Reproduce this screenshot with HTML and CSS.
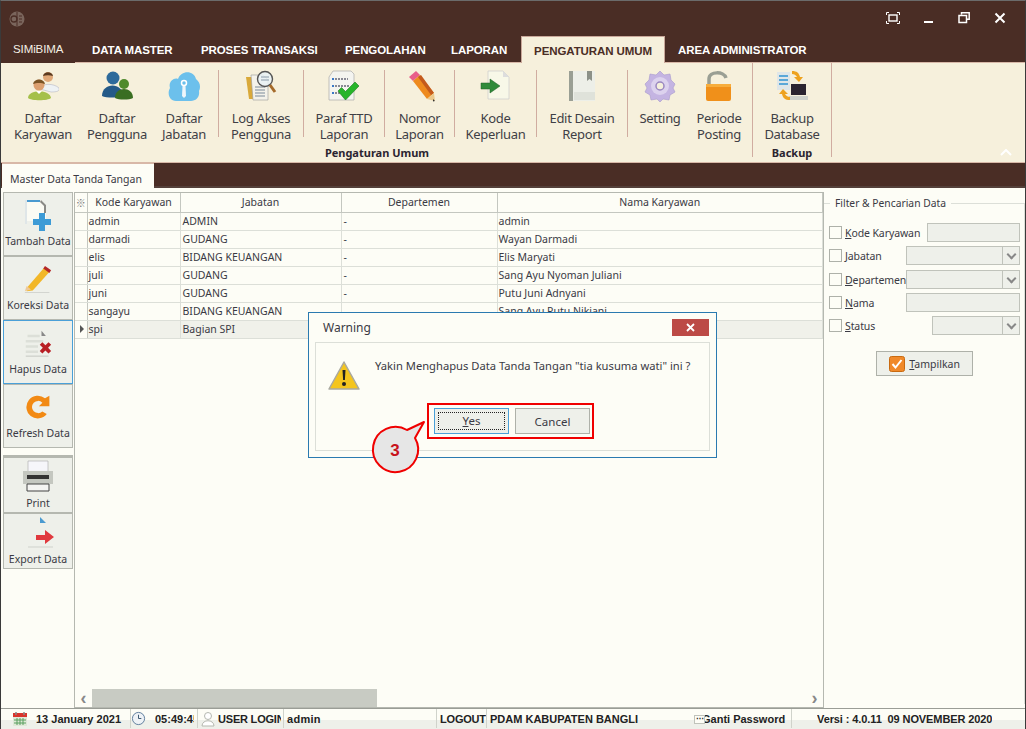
FILE: index.html
```html
<!DOCTYPE html>
<html lang="id">
<head>
<meta charset="utf-8">
<title>SIMiBIMA</title>
<link rel="stylesheet" href="styles.css">
</head>
<body>
<div class="app">
  <header class="titlebar">
    <svg class="logo" width="18" height="18" viewBox="0 0 18 18"><circle cx="9" cy="9" r="7.5" fill="#7a655c"/><path d="M9 2v14" stroke="#4a2d25"/><circle cx="6" cy="9" r="3" fill="none" stroke="#4a2d25" stroke-width="1.3"/><path d="M11 6h3M11 9h3M11 12h3" stroke="#4a2d25"/></svg>
    <div class="winbtns">
      <svg width="14" height="12" viewBox="0 0 14 12"><path d="M.5 3V.5H3M11 .5h2.500V3M13.500 9v2.500H11M3 11.500H.5V9" fill="none" stroke="#fff"/><rect x="3" y="3" width="8" height="6" fill="none" stroke="#fff" stroke-width="1.400"/></svg>
      <svg width="10" height="12" viewBox="0 0 10 12"><rect y="9" width="9" height="2" fill="#fff"/></svg>
      <svg width="12" height="12" viewBox="0 0 12 12"><path d="M3.500 2.500V.8h7.700v6.500H9M1 3.500h7.500v7H1z" fill="none" stroke="#fff" stroke-width="1.500"/></svg>
      <svg width="12" height="12" viewBox="0 0 12 12"><path d="M1.500 1.500l9 9M10.500 1.500l-9 9" stroke="#fff" stroke-width="2"/></svg>
    </div>
  </header>

  <nav class="tabs">
    <span class="tab-app">SIMiBIMA</span>
    <span class="tab t-master">DATA MASTER</span>
    <span class="tab t-proses">PROSES TRANSAKSI</span>
    <span class="tab t-olah">PENGOLAHAN</span>
    <span class="tab t-lap">LAPORAN</span>
    <span class="tab tab-active">PENGATURAN UMUM</span>
    <span class="tab t-admin">AREA ADMINISTRATOR</span>
  </nav>

  <section class="ribbon">
    <div class="group group-main">
      <div class="group-items">
        <div class="item">
          <svg class="ico" viewBox="0 0 32 32"><circle cx="21" cy="7" r="5" fill="#e0a878"/><path d="M16 6c1-5 9-5 10 0-3-1-7-1-10 0z" fill="#5b3a20"/><path d="M13 19c1-6 14-6 19-1 1 3-2 4-8 4z" fill="#eef2f4" stroke="#aab" stroke-width=".5"/><circle cx="12" cy="15" r="5.500" fill="#dca070"/><path d="M6 14c1-6 11-6 12 0-3-1.500-9-1.500-12 0z" fill="#7a5426"/><path d="M1 28c0-9 22-9 23 0-3 3-20 3-23 0z" fill="#a5c04a"/><path d="M9 21l3 3 3-3" fill="#fff"/></svg>
          <span class="lbl">Daftar<br>Karyawan</span>
        </div>
        <div class="item">
          <svg class="ico" viewBox="0 0 32 32"><circle cx="12" cy="8" r="6.500" fill="#2d6a9b"/><path d="M1 26c0-14 21-14 21 0-4 2-17 2-21 0z" fill="#245a88"/><circle cx="23" cy="14" r="5" fill="#4f8a2c"/><path d="M14 28c0-12 18-12 18 0-4 2-14 2-18 0z" fill="#3a6e22"/></svg>
          <span class="lbl">Daftar<br>Pengguna</span>
        </div>
        <div class="item sep">
          <svg class="ico" viewBox="0 0 32 32"><path d="M8 31C1 31-1 23 2 18 0 12 6 7 10 9 13 0 26 0 28 9c4 3 5 8 3 12 1 6-3 10-8 10z" fill="#6cc0ec"/><circle cx="16" cy="13" r="2.500" fill="none" stroke="#fff" stroke-width="1.500"/><path d="M14.500 16h3l.5 10-2 2-2-2z" fill="#eef6fb"/></svg>
          <span class="lbl">Daftar<br>Jabatan</span>
        </div>
        <div class="item sep">
          <svg class="ico" viewBox="0 0 32 32"><path d="M1 7h8l2 2v20H4z" fill="#d9a93a"/><path d="M6 5h12l5 5v20H8z" fill="#f4f2ea" stroke="#999" stroke-width=".6"/><path d="M10 17h10M10 20h10M10 23h10M10 26h10" stroke="#7a8a9a"/><circle cx="20" cy="9" r="7.500" fill="#e9f2f6" fill-opacity=".85" stroke="#555" stroke-width="1.400"/><path d="M16 7h8M16 10h8" stroke="#8a9aa8"/><path d="M25 15l5 7" stroke="#a56a2a" stroke-width="3"/></svg>
          <span class="lbl">Log Akses<br>Pengguna</span>
        </div>
        <div class="item sep">
          <svg class="ico" viewBox="0 0 32 32"><path d="M5 1h18l3 3v26H1V7z" fill="#f4f4f0" stroke="#aaa" stroke-width=".7"/><path d="M7 9h13M7 16h15M7 23h10" stroke="#667" stroke-width="1.300" stroke-dasharray="2 1"/><path d="M4 9h2M4 16h2M4 23h2" stroke="#3a78c8" stroke-width="2"/><path d="M10 21l3.500-3.500 4 4L27 12l4 4-13.500 14z" fill="#27b52a" stroke="#1a7a1c" stroke-width=".6"/></svg>
          <span class="lbl">Paraf TTD<br>Laporan</span>
        </div>
        <div class="item sep">
          <svg class="ico" viewBox="0 0 32 32"><path d="M5 7l7-6 4 4-7 6z" fill="#e85d8a"/><path d="M9 11l7-6 14 18-7 6z" fill="#ee8a1e"/><path d="M14 7l3-2 13 18-3 2z" fill="#c45a1c"/><path d="M23 29l7-6 1 8z" fill="#ecc98c"/><path d="M29 29l2 2-2 .5z" fill="#333"/></svg>
          <span class="lbl">Nomor<br>Laporan</span>
        </div>
        <div class="item sep">
          <svg class="ico" viewBox="0 0 32 32"><path d="M8 1h15l6 6v22H8z" fill="#f8f8e8" stroke="#ccc" stroke-width=".7"/><path d="M23 1v6h6z" fill="#ddd"/><path d="M1 13h9v-4l10 7-10 7v-4H1z" fill="#2f8a3a" stroke="#205c28" stroke-width=".5"/></svg>
          <span class="lbl">Kode<br>Keperluan</span>
        </div>
        <div class="item sep">
          <svg class="ico" viewBox="0 0 32 32"><rect x="3" y="1" width="26" height="30" fill="#edefe8"/><rect x="3" y="1" width="4" height="30" fill="#9a9f94"/><rect x="8" y="22" width="21" height="8" fill="#dfe2da"/><path d="M21 1h5v10l-2.500-2-2.500 2z" fill="#8c9188"/></svg>
          <span class="lbl">Edit Desain<br>Report</span>
        </div>
        <div class="item">
          <svg class="ico" viewBox="0 0 32 32"><path d="M16 1l4 4 6-1 1 6 4 4-2 4 2 4-5 3-1 5-6-1-3 3-3-3-6 1-1-5-5-3 2-4-2-4 4-4 1-6 6 1z" fill="#c4b4e2" stroke="#a898cc" stroke-width=".6"/><circle cx="16" cy="16" r="9" fill="#dcd2ee"/><circle cx="16" cy="16" r="4" fill="#f5f0dc" stroke="#9a88c0" stroke-width="1.500"/></svg>
          <span class="lbl">Setting</span>
        </div>
        <div class="item">
          <svg class="ico" viewBox="0 0 32 32"><path d="M6 15V9C6 1 21 1 23 8" fill="none" stroke="#9a9f94" stroke-width="3.500"/><rect x="3" y="14" width="25" height="17" rx="2" fill="#f0901a"/><rect x="3" y="14" width="25" height="3" fill="#f7ad3c"/></svg>
          <span class="lbl">Periode<br>Posting</span>
        </div>
        <div></div>
      </div>
      <div class="group-label">Pengaturan Umum</div>
    </div>
    <div class="group group-backup">
      <div class="group-items-single">
        <div class="item">
          <svg class="ico" viewBox="0 0 32 32"><rect x="1" y="2" width="13" height="18" fill="#dfe6e8"/><path d="M3 6h9M3 10h9M3 14h9" stroke="#5ba8d8" stroke-width="2"/><path d="M16 1c5 0 7 2 8 6h3l-4 5-5-5h3c-1-2-3-3-5-3z" fill="#eea21e"/><rect x="15" y="14" width="15" height="11" fill="#2b2430"/><rect x="13" y="26" width="19" height="4" fill="#cfd2cc"/><path d="M14 30c-5 0-7-2-8-6H3l4-5 5 5H9c1 2 3 3 5 3z" fill="#eea21e"/></svg>
          <span class="lbl">Backup<br>Database</span>
        </div>
      </div>
      <div class="group-label">Backup</div>
    </div>
    <svg class="collapse" width="12" height="7" viewBox="0 0 12 7"><path d="M1 6l5-5 5 5" fill="none" stroke="#fff" stroke-width="2"/></svg>
  </section>

  <div class="docbar">
    <span class="doctab">Master Data Tanda Tangan</span>
  </div>

  <main class="workspace">
    <aside class="toolbar">
      <div class="tool-group">
        <button class="tool">
          <svg class="tool-ico" viewBox="0 0 28 32"><path d="M1 1h16l5 5v16H1z" fill="#fbfbf4"/><path d="M1 1h15v2H1z" fill="#4a9ad0"/><path d="M1 1h2v24H1z" fill="#dfe6e8"/><path d="M17 1l5 5v8h-2V7l-4-4z" fill="#8a8a86"/><path d="M15 14h6v6h6v6h-6v6h-6v-6H9v-6h6z" fill="#3d9bd6"/></svg>
          <span>Tambah Data</span>
        </button>
        <button class="tool">
          <svg class="tool-ico" viewBox="0 0 32 32"><path d="M4 25l19-22 6 5-19 21-7 1z" fill="#f2b728"/><path d="M22 4l2-3 7 5-2 3z" fill="#b42828"/><path d="M1 30l2-6 5 4z" fill="#eec998"/><path d="M1 31h28v1H1z" fill="#cfd2cc"/></svg>
          <span>Koreksi Data</span>
        </button>
        <button class="tool tool-focus">
          <svg class="tool-ico" viewBox="0 0 32 32"><path d="M20 2l5 6h-5z" fill="#888"/><path d="M4 8h14M2 14h20M2 20h14M2 26h14" stroke="#dcdfd8" stroke-width="3"/><path d="M2 31h26" stroke="#bfc2ba"/><path d="M18 18l3-3 3.500 3.500L28 15l3 3-3.500 3.500L31 25l-3 3-3.500-3.500L21 28l-3-3 3.500-3.500z" fill="#b81f24"/></svg>
          <span>Hapus Data</span>
        </button>
        <button class="tool">
          <svg class="tool-ico" viewBox="0 0 32 32"><path d="M26 24a13 13 0 1 1-2-18l5-3v12H17l4-4a7 7 0 1 0 0 10z" fill="#f28a14"/></svg>
          <span>Refresh Data</span>
        </button>
      </div>
      <div class="tool-group tool-group-2">
        <button class="tool tool-small">
          <svg class="tool-ico" viewBox="0 0 32 32"><path d="M6 1h20v11H6z" fill="#f6f6fa" stroke="#aaa" stroke-width=".6"/><path d="M1 11h30v13H1z" fill="#c4c7c0"/><rect x="5" y="15" width="22" height="4" fill="#333"/><path d="M5 24h22v7H5z" fill="#f4f4f2" stroke="#444"/></svg>
          <span>Print</span>
        </button>
        <button class="tool tool-small">
          <svg class="tool-ico" viewBox="0 0 32 32"><path d="M18 1l6 6h-6z" fill="#4a9ad0"/><path d="M14 19h9v-5l9 7-9 7v-4h-9z" fill="#e0393e"/><path d="M6 31h25" stroke="#cfd2cc"/></svg>
          <span>Export Data</span>
        </button>
      </div>
    </aside>

    <section class="grid-wrap">
      <table class="grid">
        <thead>
          <tr><th class="ind"><span class="star">&#8251;</span></th><th>Kode Karyawan</th><th>Jabatan</th><th>Departemen</th><th>Nama Karyawan</th></tr>
        </thead>
        <tbody>
          <tr><td class="ind"></td><td>admin</td><td>ADMIN</td><td>-</td><td>admin</td></tr>
          <tr><td class="ind"></td><td>darmadi</td><td>GUDANG</td><td>-</td><td>Wayan Darmadi</td></tr>
          <tr><td class="ind"></td><td>elis</td><td>BIDANG KEUANGAN</td><td>-</td><td>Elis Maryati</td></tr>
          <tr><td class="ind"></td><td>juli</td><td>GUDANG</td><td>-</td><td>Sang Ayu Nyoman Juliani</td></tr>
          <tr><td class="ind"></td><td>juni</td><td>GUDANG</td><td>-</td><td>Putu Juni Adnyani</td></tr>
          <tr><td class="ind"></td><td>sangayu</td><td>BIDANG KEUANGAN</td><td>-</td><td>Sang Ayu Putu Nikiani</td></tr>
          <tr class="sel"><td class="ind"><i class="caret"></i></td><td>spi</td><td>Bagian SPI</td><td></td><td></td></tr>
        </tbody>
      </table>
      <div class="hscroll">
        <span class="sb-arrow">&#8249;</span>
        <div class="sb-track"><div class="sb-thumb"></div></div>
        <span class="sb-arrow">&#8250;</span>
      </div>
    </section>

    <aside class="filter">
      <fieldset class="fset">
        <legend>Filter &amp; Pencarian Data</legend>
        <div class="frow r-kode"><i class="cb"></i><label><u>K</u>ode Karyawan</label><span class="inp"></span></div>
        <div class="frow r-jab"><i class="cb"></i><label><u>J</u>abatan</label><span class="inp combo"><b class="drop"></b></span></div>
        <div class="frow r-dep"><i class="cb"></i><label><u>D</u>epartemen</label><span class="inp combo"><b class="drop"></b></span></div>
        <div class="frow r-nama"><i class="cb"></i><label><u>N</u>ama</label><span class="inp"></span></div>
        <div class="frow r-stat"><i class="cb"></i><label><u>S</u>tatus</label><span class="inp combo"><b class="drop"></b></span></div>
        <button class="show">
          <svg width="16" height="16" viewBox="0 0 16 16"><rect x=".5" y=".5" width="15" height="15" rx="2" fill="#f0892a" stroke="#c96a10"/><path d="M3.500 8l3 3.500 6-7.500" fill="none" stroke="#fff" stroke-width="2"/></svg>
          <span><u>T</u>ampilkan</span>
        </button>
      </fieldset>
    </aside>
  </main>

  <footer class="status">
    <svg class="st-ico" width="16" height="16" viewBox="0 0 16 16"><rect x="1" y="2" width="14" height="13" fill="#dfe8d8"/><rect x="1" y="2" width="14" height="4" fill="#d8342c"/><path d="M4 1v3M12 1v3" stroke="#888" stroke-width="1.500"/><path d="M2 9h12M2 12h12M5 7v7M8 7v7M11 7v7" stroke="#5aa060"/></svg>
    <span class="st s-date">13 January 2021</span>
    <span class="st s-clock"><svg width="15" height="15" viewBox="0 0 16 16"><circle cx="8" cy="8" r="6.500" fill="#eef2f6" stroke="#5a7a9a"/><path d="M8 4v4h3" fill="none" stroke="#33506a"/></svg></span>
    <span class="st s-time">05:49:45</span>
    <span class="st s-user"><svg width="14" height="16" viewBox="0 0 14 16"><circle cx="7" cy="5" r="3.500" fill="#fff" stroke="#b5b8b0"/><path d="M1 15c0-7 12-7 12 0z" fill="#fff" stroke="#b5b8b0"/></svg></span>
    <span class="st s-ulabel">USER LOGIN</span>
    <span class="st s-admin">admin</span>
    <span class="st s-logout">LOGOUT</span>
    <span class="st s-pdam">PDAM KABUPATEN BANGLI</span>
    <span class="st s-ganti"><i class="dots">&#8943;</i><span class="clip">Ganti Password</span></span>
    <span class="st s-ver">Versi : 4.0.11&nbsp; 09 NOVEMBER 2020</span>
  </footer>

  <div class="dialog" role="dialog">
    <div class="dlg-head">
      <span class="dlg-title">Warning</span>
      <span class="dlg-close"><svg width="9" height="9" viewBox="0 0 9 9"><path d="M1 1l7 7M8 1L1 8" stroke="#fff" stroke-width="1.800"/></svg></span>
    </div>
    <div class="dlg-body">
      <div class="dlg-msg">
        <svg width="32" height="30" viewBox="0 0 32 30"><path d="M16 1L31 28H1z" fill="#f4c51e" stroke="#a9a9a0" stroke-width="1.500" stroke-linejoin="round"/><path d="M14.500 9h3l-.6 10h-1.800z" fill="#222"/><circle cx="16" cy="23" r="2" fill="#222"/></svg>
        <p>Yakin Menghapus Data Tanda Tangan "tia kusuma wati" ini ?</p>
      </div>
      <div class="dlg-actions">
        <button class="dbtn dbtn-yes"><span class="focus-ring"><u>Y</u>es</span></button>
        <button class="dbtn">Cancel</button>
      </div>
    </div>
  </div>

  <svg class="callout" width="64" height="64" viewBox="0 0 64 64"><path d="M54 6L37 14A22.600 22.600 0 1 0 45 22z" fill="#e6e6e6" stroke="#f00000" stroke-width="2" stroke-linejoin="round"/><text x="25" y="39.500" text-anchor="middle" class="callout-num">3</text></svg>
</div>
</body>
</html>
```
FILE: styles.css
```css
* { box-sizing: border-box; }
html, body { margin: 0; height: 100%; }
body { font-family: "Noto Sans", "Liberation Sans", sans-serif; color: #3a3a3a; }
button { font: inherit; color: inherit; padding: 0; }

.app { position: relative; width: 1026px; height: 729px; overflow: hidden; display: flex; flex-direction: column; background: #4a2d25; border-top: 1px solid #6b6b6b; border-left: 1px solid #3a3a3a; border-right: 1px solid #3a3a3a; }

.titlebar { height: 35px; flex: none; display: flex; justify-content: space-between; align-items: center; padding: 0 19px 0 7px; }
.logo { margin-top: 1px; }
.winbtns { display: flex; align-items: center; gap: 24px; margin-top: -1px; }

.tabs { height: 26px; flex: none; display: flex; color: #fff; font: bold 11.5px "Liberation Sans", sans-serif; letter-spacing: -.1px; }
.tab-app { width: 74px; height: 27px; position: relative; z-index: 1; background: #4a2d25; font-weight: normal; padding: 7px 0 0 12px; color: #f4f0e6; }
.tab { padding-top: 8px; white-space: nowrap; }
.t-master { margin-left: 17px; width: 109px; }
.t-proses { width: 144px; }
.t-olah { width: 106px; }
.t-lap { width: 70px; }
.tab-active { width: 144px; height: 27px; position: relative; z-index: 1; text-align: center; background: #f6f0dc; color: #4a2d25; border: 1px solid #c9a89a; border-bottom: 0; }
.t-admin { margin-left: 13px; }

.ribbon { position: relative; height: 101px; flex: none; display: flex; background: #f6f0dc; border-top: 1px solid #d8b8a8; border-bottom: 1px solid #d8b8a8; padding-left: 1px; }
.group { display: flex; flex-direction: column; align-items: center; height: 94px; }
.group-main { width: 751px; border-right: 1px solid #d0aca0; }
.group-backup { width: 79px; border-right: 1px solid #d0aca0; }
.group-items { display: grid; grid-template-columns: 82px 66px 69px 85px 81px 70px 82px 91px 64px 54px 6px; flex: none; height: 67px; margin-top: 7px; }
.group-items-single { flex: none; height: 67px; margin-top: 7px; }
.group-label { flex: none; font: bold 11px "Noto Sans", sans-serif; color: #2b2430; line-height: 14px; margin-top: 9px; white-space: nowrap; }
.item { display: flex; flex-direction: column; align-items: center; height: 67px; font-size: 13px; letter-spacing: -.3px; line-height: 16px; color: #3f3f46; }
.sep { border-right: 1px solid #d0aca0; }
.ico { width: 32px; height: 32px; flex: none; margin-bottom: 8px; }
.lbl { text-align: center; white-space: nowrap; }
.collapse { position: absolute; right: 13px; bottom: 6px; }

.docbar { height: 25px; flex: none; background: #4a2d25; box-shadow: inset 0 -2px #54403a; padding-left: 1px; display: flex; align-items: flex-end; }
.doctab { height: 25px; width: 152px; padding: 3px 4px 0 0; background: #fdfdf6; font-size: 10.5px; line-height: 24px; text-align: center; border-top: 1px solid #d8b8a8; white-space: nowrap; color: #3a3a44; }

.workspace { flex: 1; min-height: 0; display: flex; background: #fdfdf6; padding: 4px 1px 0 2px; border-bottom: 1px solid #9a9d96; }
.toolbar { width: 70px; flex: none; display: flex; flex-direction: column; }
.tool-group { display: flex; flex-direction: column; }
.tool-group-2 { margin-top: 7px; border-top: 2px solid #b5b8b0; }
.tool { width: 70px; height: 64px; display: flex; flex-direction: column; align-items: center; background: #eef0ea; border: 1px solid #b5b8b0; font-size: 10.5px; line-height: 14px; white-space: nowrap; padding-top: 6px; color: #3a3a44; }
.tool span { margin-top: 3px; }
.tool-focus { border: 1px solid #4aa0d8; }
.tool-small { height: 56px; padding-top: 2px; }
.tool-small span { margin-top: 4px; }
.tool-ico { width: 28px; height: 32px; flex: none; }
.tool-small .tool-ico { width: 32px; height: 32px; }

.grid-wrap { width: 750px; height: 516px; flex: none; margin-left: 1px; border: 1px solid #b5b8b0; display: flex; flex-direction: column; justify-content: space-between; background: #fdfdf6; }
.grid { border-collapse: collapse; table-layout: fixed; width: 748px; font-size: 10.5px; color: #3a3a44; }
.grid th { font-weight: normal; height: 19px; padding: 0; text-align: center; background: #fdfdf6; border-right: 1px solid #c4c7c0; border-bottom: 1px solid #c4c7c0; }
.grid td { height: 18px; padding: 0 0 0 1px; border-right: 1px solid #dcdfd8; border-bottom: 1px solid #dcdfd8; white-space: nowrap; line-height: 14px; }
.grid td:nth-child(3), .grid td:nth-child(4) { padding-left: 2px; }
.grid th:nth-child(1) { width: 12px; }
.grid th:nth-child(2) { width: 93px; }
.grid th:nth-child(3) { width: 161px; }
.grid th:nth-child(4) { width: 156px; }
.star { font: 10px "Noto Sans CJK JP", sans-serif; color: #777; }
.sel td { background: #f0f1ea; }
.grid td.ind { background: #fdfdf6; border-right-color: #c4c7c0; }
.caret { display: block; width: 0; height: 0; margin-left: 4px; border-left: 4px solid #555; border-top: 4px solid transparent; border-bottom: 4px solid transparent; }

.hscroll { height: 18px; display: flex; align-items: center; }
.sb-arrow { width: 17px; flex: none; text-align: center; font: bold 18px/16px "Liberation Sans", sans-serif; color: #888; }
.sb-track { flex: 1; height: 18px; }
.sb-thumb { width: 285px; height: 100%; background: #c8cbc3; }

.filter { width: 199px; flex: none; padding: 4px 0 0 0; }
.fset { margin: 0; padding: 0 4px 0 5px; border: 0; border-top: 1px solid #dcdfd8; border-right: 1px solid #dcdfd8; height: 508px; display: flex; flex-direction: column; }
.fset legend { font-size: 10.3px; line-height: 14px; padding: 0 5px; margin-left: 1px; color: #3a3a44; }
.frow { display: flex; align-items: center; height: 19px; font-size: 10.5px; letter-spacing: -.1px; margin-bottom: 4px; color: #3a3a44; }
.r-kode { margin-top: 13px; }
.r-dep { margin-top: 1px; }
.cb { width: 13px; height: 13px; flex: none; border: 1px solid #aeb1a9; background: #fdfdf6; margin-right: 3px; }
.frow label { flex: 1; white-space: nowrap; }
.inp { flex: none; height: 19px; background: #eef0ea; border: 1px solid #c0c3bb; display: flex; justify-content: flex-end; }
.r-kode .inp { width: 93px; }
.r-jab .inp, .r-dep .inp, .r-nama .inp { width: 114px; }
.r-stat .inp { width: 88px; }
.drop { width: 17px; border-left: 1px solid #c0c3bb; position: relative; }
.drop::after { content: ""; position: absolute; left: 5px; top: 4px; width: 5px; height: 5px; border-right: 2px solid #888; border-bottom: 2px solid #888; transform: rotate(45deg); }
.show { align-self: center; margin-top: 12px; width: 97px; height: 25px; background: #eef0ea; border: 1px solid #aeb1a9; display: flex; align-items: center; justify-content: center; gap: 4px; font-size: 10.5px; color: #3a3a44; }

.status { height: 20px; flex: none; display: flex; align-items: center; background: linear-gradient(#fdfdf6 0 11px, #eef0ea 11px); font: bold 11px "Liberation Sans", sans-serif; color: #222; padding: 0 0 1px 11px; }
.st { white-space: nowrap; overflow: hidden; display: flex; align-items: center; height: 19px; }
.s-date { margin-left: 8px; width: 94px; }
.s-clock { width: 25px; border-left: 1px solid #d0d3cb; }
.s-time { width: 39px; margin-right: 3px; }
.s-user { width: 21px; border-left: 1px solid #d0d3cb; padding-left: 3px; }
.s-ulabel { width: 63px; margin-right: 2px; letter-spacing: -.2px; }
.s-admin { width: 153px; border-left: 1px solid #d0d3cb; padding-left: 3px; letter-spacing: .3px; }
.s-logout { width: 50px; border-left: 1px solid #d0d3cb; padding-left: 3px; letter-spacing: -.2px; }
.s-pdam { width: 208px; border-left: 1px solid #d0d3cb; padding-left: 3px; }
.s-ganti { width: 98px; border-right: 1px solid #d0d3cb; }
.dots { font-style: normal; flex: none; width: 11px; height: 9px; border: 1px solid #c0c3bb; background: #fdfdf6; position: relative; z-index: 1; font-size: 8px; line-height: 6px; text-align: center; margin-top: 1px; overflow: hidden; }
.clip { margin-left: -3px; }
.s-ver { margin-left: 25px; letter-spacing: -.1px; }

.dialog { position: absolute; left: 307px; top: 311px; width: 409px; height: 146px; background: #fdfdf6; border: 1px solid #2a7ab0; padding: 6px; display: flex; flex-direction: column; font-size: 12px; color: #3a3a44; }
.dlg-head { height: 23px; flex: none; display: flex; justify-content: space-between; align-items: flex-start; padding-left: 8px; }
.dlg-title { font-size: 12px; line-height: 17px; }
.dlg-close { width: 37px; height: 17px; background: #bc4a46; display: flex; align-items: center; justify-content: center; margin-right: 1px; }
.dlg-body { flex: 1; border: 1px solid #dcdfd8; display: flex; flex-direction: column; }
.dlg-msg { display: flex; height: 65px; padding: 13px 0 0 12px; }
.dlg-msg svg { margin-top: 5px; flex: none; }
.dlg-msg p { margin: 2px 0 0 15px; font-size: 11.2px; line-height: 16px; white-space: nowrap; }
.dlg-actions { display: flex; gap: 6px; padding-left: 118px; position: relative; }
.dbtn { width: 75px; height: 26px; background: #eef0ea; border: 1px solid #aeb1a9; display: flex; align-items: center; justify-content: center; font-size: 11.5px; color: #3a3a44; }
.dbtn-yes { border-color: #4aa0d8; padding: 3px; }
.focus-ring { display: block; width: 100%; height: 100%; border: 1px dotted #222; line-height: 16px; }
.dlg-actions::after { content: ""; box-sizing: border-box; position: absolute; left: 111px; top: -5px; width: 167px; height: 36px; border: 2px solid #f00000; pointer-events: none; }

.callout { position: absolute; left: 369px; top: 415px; }
.callout-num { font: bold 17px "Liberation Sans", sans-serif; fill: #c8141c; }
```
